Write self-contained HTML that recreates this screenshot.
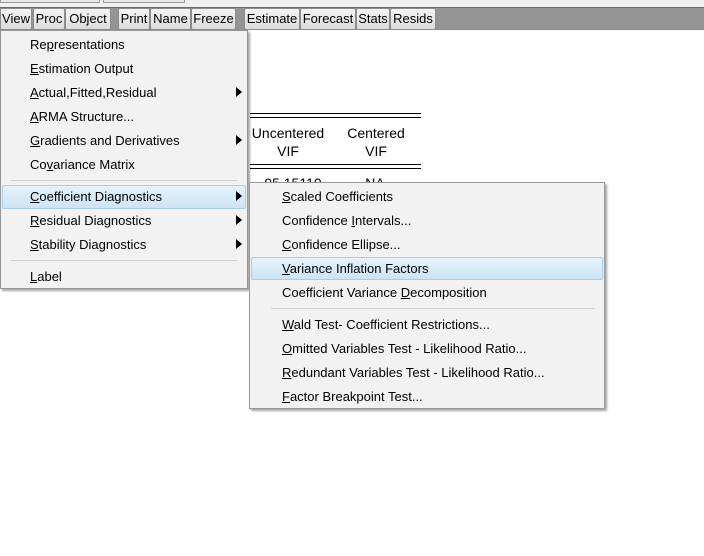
<!DOCTYPE html>
<html><head><style>
*{margin:0;padding:0;box-sizing:border-box}
body{width:704px;height:556px;position:relative;background:#fff;font-family:"Liberation Sans",sans-serif;font-size:13px;color:#000;overflow:hidden}
.top{position:absolute;left:0;top:0;width:704px;height:8px;background:#f0f0f0}
.bar{position:absolute;left:0;top:7px;width:704px;height:23px;background:#959595;border-top:1px solid #6a6a6a;border-bottom:1px solid #8a8a8a}
.b{position:absolute;top:8px;height:22px;background:linear-gradient(#f4f4f4,#dcdcdc);border:1px solid #8c8c8c;border-radius:2px;text-align:center;line-height:20px;font-size:13px}
.m{position:absolute;background:#f2f2f2;border:1px solid #979797;box-shadow:2px 2px 2px rgba(0,0,0,.35)}
.i{position:absolute;height:22px;line-height:24px;white-space:nowrap}
.hl{position:absolute;background:linear-gradient(#e6f2fb,#cde4f5);border:1px solid #a9cde8;border-radius:2px}
.sep{position:absolute;height:1px;background:#d0d0d0}
.ar{position:absolute;width:0;height:0;border-top:5px solid transparent;border-bottom:5px solid transparent;border-left:6px solid #000}
.t{position:absolute;font-size:14px;text-align:center;line-height:18px}
.hr{position:absolute;left:250px;width:171px;height:1px;background:#000}
</style></head><body>
<div class="top"></div>
<div style="position:absolute;left:0;top:0;width:100px;height:3px;border:1px solid #999;border-top:none;background:#e8e8e8"></div>
<div style="position:absolute;left:103px;top:0;width:82px;height:3px;border:1px solid #999;border-top:none;background:#e8e8e8"></div>
<div class="bar"></div>
<div class="b" style="left:0;width:32px">View</div>
<div class="b" style="left:33px;width:32px">Proc</div>
<div class="b" style="left:65px;width:46px">Object</div>
<div class="b" style="left:118px;width:32px">Print</div>
<div class="b" style="left:150px;width:41px">Name</div>
<div class="b" style="left:191px;width:45px">Freeze</div>
<div class="b" style="left:244px;width:56px">Estimate</div>
<div class="b" style="left:300px;width:56px">Forecast</div>
<div class="b" style="left:356px;width:34px">Stats</div>
<div class="b" style="left:390px;width:46px">Resids</div>

<div class="hr" style="top:113px"></div><div class="hr" style="top:117px"></div>
<div class="t" style="left:248px;top:124px;width:80px">Uncentered<br>VIF</div>
<div class="t" style="left:336px;top:124px;width:80px">Centered<br>VIF</div>
<div class="hr" style="top:164px"></div><div class="hr" style="top:168px"></div>
<div class="t" style="left:258px;top:174px;width:70px">95.15110</div>
<div class="t" style="left:350px;top:174px;width:50px">NA</div>

<div class="m" style="left:0;top:30px;width:248px;height:259px">
<div class="hl" style="left:1px;top:154px;width:244px;height:24px"></div>
<div class="i" style="left:29px;top:2px">Re<u>p</u>resentations</div>
<div class="i" style="left:29px;top:26px"><u>E</u>stimation Output</div>
<div class="i" style="left:29px;top:50px"><u>A</u>ctual,Fitted,Residual</div>
<div class="ar" style="left:235px;top:56px"></div>
<div class="i" style="left:29px;top:74px"><u>A</u>RMA Structure...</div>
<div class="i" style="left:29px;top:98px"><u>G</u>radients and Derivatives</div>
<div class="ar" style="left:235px;top:104px"></div>
<div class="i" style="left:29px;top:122px">Co<u>v</u>ariance Matrix</div>
<div class="sep" style="left:10px;top:149px;width:226px"></div>
<div class="i" style="left:29px;top:154px"><u>C</u>oefficient Diagnostics</div>
<div class="ar" style="left:235px;top:160px"></div>
<div class="i" style="left:29px;top:178px"><u>R</u>esidual Diagnostics</div>
<div class="ar" style="left:235px;top:184px"></div>
<div class="i" style="left:29px;top:202px"><u>S</u>tability Diagnostics</div>
<div class="ar" style="left:235px;top:208px"></div>
<div class="sep" style="left:10px;top:229px;width:226px"></div>
<div class="i" style="left:29px;top:234px"><u>L</u>abel</div>
</div>

<div class="m" style="left:249px;top:182px;width:356px;height:227px">
<div class="hl" style="left:1px;top:74px;width:352px;height:23px"></div>
<div class="i" style="left:32px;top:2px"><u>S</u>caled Coefficients</div>
<div class="i" style="left:32px;top:26px">Confidence <u>I</u>ntervals...</div>
<div class="i" style="left:32px;top:50px"><u>C</u>onfidence Ellipse...</div>
<div class="i" style="left:32px;top:74px"><u>V</u>ariance Inflation Factors</div>
<div class="i" style="left:32px;top:98px">Coefficient Variance <u>D</u>ecomposition</div>
<div class="sep" style="left:21px;top:125px;width:324px"></div>
<div class="i" style="left:32px;top:130px"><u>W</u>ald Test- Coefficient Restrictions...</div>
<div class="i" style="left:32px;top:154px"><u>O</u>mitted Variables Test - Likelihood Ratio...</div>
<div class="i" style="left:32px;top:178px"><u>R</u>edundant Variables Test - Likelihood Ratio...</div>
<div class="i" style="left:32px;top:202px"><u>F</u>actor Breakpoint Test...</div>
</div>
</body></html>
